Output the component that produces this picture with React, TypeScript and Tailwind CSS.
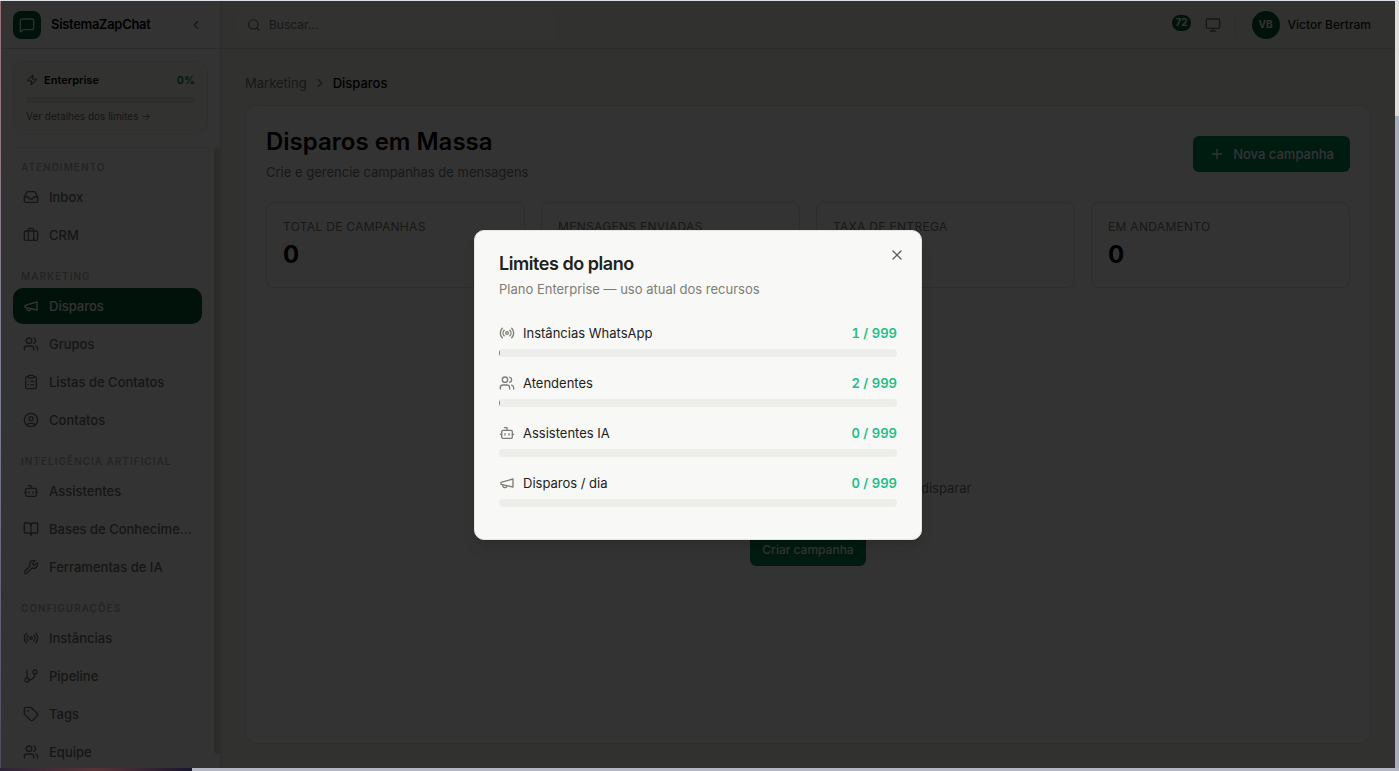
import { useState } from "react";
import type { ComponentType } from "react";
import {
  BookOpen,
  Bot,
  Briefcase,
  ChevronLeft,
  ChevronRight,
  CircleUser,
  ClipboardList,
  GitBranch,
  Inbox,
  MessageSquare,
  Monitor,
  Plus,
  Radio,
  Search,
  Send,
  Tag,
  Users,
  Wrench,
  X,
  Zap,
} from "lucide-react";

type IconType = ComponentType<{ className?: string }>;

function Megaphone({ className }: { className?: string }) {
  return (
    <svg
      className={className}
      viewBox="0 0 24 24"
      fill="none"
      stroke="currentColor"
      strokeWidth="2"
      strokeLinecap="round"
      strokeLinejoin="round"
    >
      <path d="m3 11 18-5v12L3 14v-3z" />
      <path d="M11.6 16.8a3 3 0 1 1-5.8-1.6" />
    </svg>
  );
}

const sections: { title: string; items: { label: string; icon: IconType }[] }[] = [
  {
    title: "Atendimento",
    items: [
      { label: "Inbox", icon: Inbox },
      { label: "CRM", icon: Briefcase },
    ],
  },
  {
    title: "Marketing",
    items: [
      { label: "Disparos", icon: Megaphone },
      { label: "Grupos", icon: Users },
      { label: "Listas de Contatos", icon: ClipboardList },
      { label: "Contatos", icon: CircleUser },
    ],
  },
  {
    title: "Inteligência Artificial",
    items: [
      { label: "Assistentes", icon: Bot },
      { label: "Bases de Conhecimento", icon: BookOpen },
      { label: "Ferramentas de IA", icon: Wrench },
    ],
  },
  {
    title: "Configurações",
    items: [
      { label: "Instâncias", icon: Radio },
      { label: "Pipeline", icon: GitBranch },
      { label: "Tags", icon: Tag },
      { label: "Equipe", icon: Users },
    ],
  },
];

const stats = [
  { label: "Total de campanhas", value: 0 },
  { label: "Mensagens enviadas", value: 0 },
  { label: "Taxa de entrega", value: "0%" },
  { label: "Em andamento", value: 0 },
];

const limits: { label: string; icon: IconType; used: number; max: number }[] = [
  { label: "Instâncias WhatsApp", icon: Radio, used: 1, max: 999 },
  { label: "Atendentes", icon: Users, used: 2, max: 999 },
  { label: "Assistentes IA", icon: Bot, used: 0, max: 999 },
  { label: "Disparos / dia", icon: Megaphone, used: 0, max: 999 },
];

function Sidebar({ onOpenLimits }: { onOpenLimits: () => void }) {
  return (
    <aside className="flex w-[220px] shrink-0 flex-col border-r border-[#dcdcd2] bg-white">
      <div className="flex h-12 shrink-0 items-center gap-2.5 border-b border-[#dcdcd2] px-3">
        <div className="flex size-7 items-center justify-center rounded-lg bg-[#005a32] text-[#e6f0e6]">
          <MessageSquare className="size-4" />
        </div>
        <span className="flex-1 text-[13px] font-semibold tracking-tight text-black">SistemaZapChat</span>
        <button aria-label="Recolher menu" className="p-[5px] text-[#6e6e69]">
          <ChevronLeft className="size-3.5" />
        </button>
      </div>

      <div className="mx-3 border-b border-[#ebebe6] py-3">
        <div className="rounded-xl border border-[#ebebe6] bg-[#fafaf5] px-3 py-2.5">
          <div className="mb-[9px] flex items-center gap-1.5 text-[11px] leading-4 font-semibold">
            <Zap className="size-3 text-[#005a32]" />
            <span className="flex-1 text-black">Enterprise</span>
            <span className="text-[#00784b] tabular-nums">0%</span>
          </div>
          <div className="mb-1.5 h-1.5 rounded-full bg-[#e6e6e1]" />
          <button onClick={onOpenLimits} className="block text-[10px] leading-[15px] text-[#6e6e69]">
            Ver detalhes dos limites →
          </button>
        </div>
      </div>

      <div className="flex min-h-0 flex-1">
        <nav className="flex min-w-0 flex-1 flex-col gap-4 overflow-hidden px-3 pt-3">
          {sections.map((section) => (
            <div key={section.title}>
              <h2 className="px-2 pb-1 text-[10px] leading-[15px] font-semibold tracking-widest text-[#b4b4af] uppercase">
                {section.title}
              </h2>
              <div className="flex flex-col gap-0.5">
                {section.items.map(({ label, icon: Icon }) => (
                  <a
                    key={label}
                    href="#"
                    className={
                      "flex h-9 items-center gap-2.5 rounded-[10px] px-2.5 text-[13px] leading-5 font-medium " +
                      (label === "Disparos" ? "bg-[#005a32] text-white" : "text-[#6e6e69]")
                    }
                  >
                    <Icon className="size-4 shrink-0" />
                    <span className="truncate">{label}</span>
                  </a>
                ))}
              </div>
            </div>
          ))}
        </nav>
        <div className="mb-3.5 w-1.5 rounded-full bg-[#dcdcd7]" />
      </div>
    </aside>
  );
}

function Header() {
  return (
    <header className="flex h-12 shrink-0 items-center justify-between border-b border-[#dcdcd2] pr-6 pl-4">
      <label className="flex h-8 w-80 items-center gap-2 rounded-lg bg-[#f7f7f5] px-2.5 text-[#6e6e69]">
        <Search className="size-3.5 shrink-0" />
        <input
          type="text"
          placeholder="Buscar..."
          aria-label="Buscar"
          className="w-full bg-transparent text-xs outline-none placeholder:text-[#787873]"
        />
      </label>
      <div className="flex items-center">
        <span className="mr-3.5 mb-1 flex h-4 items-center rounded-full bg-[#005a32] px-[3px] text-[10px] font-bold text-white">
          72
        </span>
        <button aria-label="Tela" className="text-[#6e6e69]">
          <Monitor className="size-4" />
        </button>
        <div className="mr-4 ml-3.5 h-5 w-px bg-[#dcdcd2]" />
        <div className="mr-2 flex size-7 items-center justify-center rounded-full bg-[#005a32] text-[10px] font-bold text-white">
          VB
        </div>
        <span className="text-xs font-medium text-[#1e1e19]">Victor Bertram</span>
      </div>
    </header>
  );
}

function Campaigns() {
  return (
    <main className="flex min-h-0 flex-1 flex-col p-6">
      <div className="mb-3 flex items-center gap-1.5 text-[13px] leading-5">
        <a href="#" className="text-[#787873]">
          Marketing
        </a>
        <ChevronRight className="size-3.5 text-[#787873]" />
        <span className="font-medium text-black">Disparos</span>
      </div>

      <section className="flex min-h-0 flex-1 flex-col overflow-hidden rounded-xl border border-[#e1e1dc] bg-white p-5">
        <div className="mb-5 flex items-center justify-between">
          <div>
            <h1 className="text-2xl font-semibold text-black">Disparos em Massa</h1>
            <p className="mt-1 text-[13px] leading-5 text-[#787873]">Crie e gerencie campanhas de mensagens</p>
          </div>
          <button className="flex h-9 items-center gap-2 rounded-md bg-[#008750] px-4 text-[13px] leading-5 font-medium text-white">
            <Plus className="size-4" />
            Nova campanha
          </button>
        </div>

        <div className="grid grid-cols-4 gap-4">
          {stats.map((stat) => (
            <div key={stat.label} className="rounded-lg border border-[#e1e1dc] p-4">
              <p className="text-xs tracking-wide text-[#787873] uppercase">{stat.label}</p>
              <p className="mt-1 text-2xl font-bold text-black">{stat.value}</p>
            </div>
          ))}
        </div>

        <div className="flex flex-1 flex-col items-center pt-[114px] text-center">
          <Send className="size-8 text-[#a5a5a0]" />
          <h2 className="mt-4 mb-2 text-sm font-semibold text-black">Nenhuma campanha</h2>
          <p className="w-[336px] text-[13px] leading-5 text-[#787873]">
            Crie sua primeira campanha para começar a disparar mensagens em massa.
          </p>
          <button className="mt-4 h-8 rounded-md bg-[#008750] px-3 text-xs font-medium text-white">
            Criar campanha
          </button>
        </div>
      </section>
    </main>
  );
}

function LimitsDialog({ onClose }: { onClose: () => void }) {
  return (
    <div className="absolute inset-0 flex items-center justify-center bg-black/80">
      <div
        role="dialog"
        aria-labelledby="limits-title"
        className="relative w-full max-w-md rounded-[10px] border border-[#e6e6e1] bg-[#f8f8f6] p-6 shadow-lg"
      >
        <h2 id="limits-title" className="text-lg leading-[18px] font-semibold tracking-tight text-[#21211c]">
          Limites do plano
        </h2>
        <p className="mt-1.5 text-[13px] leading-5 text-[#7d7d75]">Plano Enterprise — uso atual dos recursos</p>
        <div className="mt-4 flex flex-col gap-4 py-2">
          {limits.map(({ label, icon: Icon, used, max }) => (
            <div key={label}>
              <div className="mb-1.5 flex items-center gap-2 text-[13px] leading-5">
                <Icon className="size-4 text-[#7d7d75]" />
                <span className="flex-1 text-[#21211c]">{label}</span>
                <span className="font-semibold text-[#20bf85] tabular-nums">
                  {used} / {max}
                </span>
              </div>
              <div className="h-2 overflow-hidden rounded-full bg-[#ededea]">
                <div className="h-full bg-[#10b981]" style={{ width: `${Math.round((used / max) * 1000) / 10}%` }} />
              </div>
            </div>
          ))}
        </div>
        <button onClick={onClose} aria-label="Fechar" className="absolute top-4 right-4 text-[#5f5f59]">
          <X className="size-4" />
        </button>
      </div>
    </div>
  );
}

function App() {
  const [limitsOpen, setLimitsOpen] = useState(true);

  return (
    <div className="flex h-screen flex-col border-t border-[#dce1e8] font-['Inter',sans-serif]">
      <div className="flex min-h-0 flex-1">
        <div className="w-px bg-linear-to-b from-[#9b7378] via-[#7d8298] to-[#504b5f]" />
        <div className="relative flex min-w-0 flex-1 overflow-hidden bg-[#f5f5eb]">
          <Sidebar onOpenLimits={() => setLimitsOpen(true)} />
          <div className="flex min-w-0 flex-1 flex-col">
            <Header />
            <Campaigns />
          </div>
          {limitsOpen && <LimitsDialog onClose={() => setLimitsOpen(false)} />}
        </div>
        <div className="w-1 bg-linear-to-b from-[#e1dfde] from-15% to-[#aab0c3] to-15%" />
      </div>
      <div className="flex h-[3px] shrink-0">
        <div className="w-48 bg-linear-to-r from-[#2d2437] via-[#5a3237] to-[#19162d]" />
        <div className="flex-1 bg-[#b4b7c3]" />
      </div>
    </div>
  );
}

export default App;
